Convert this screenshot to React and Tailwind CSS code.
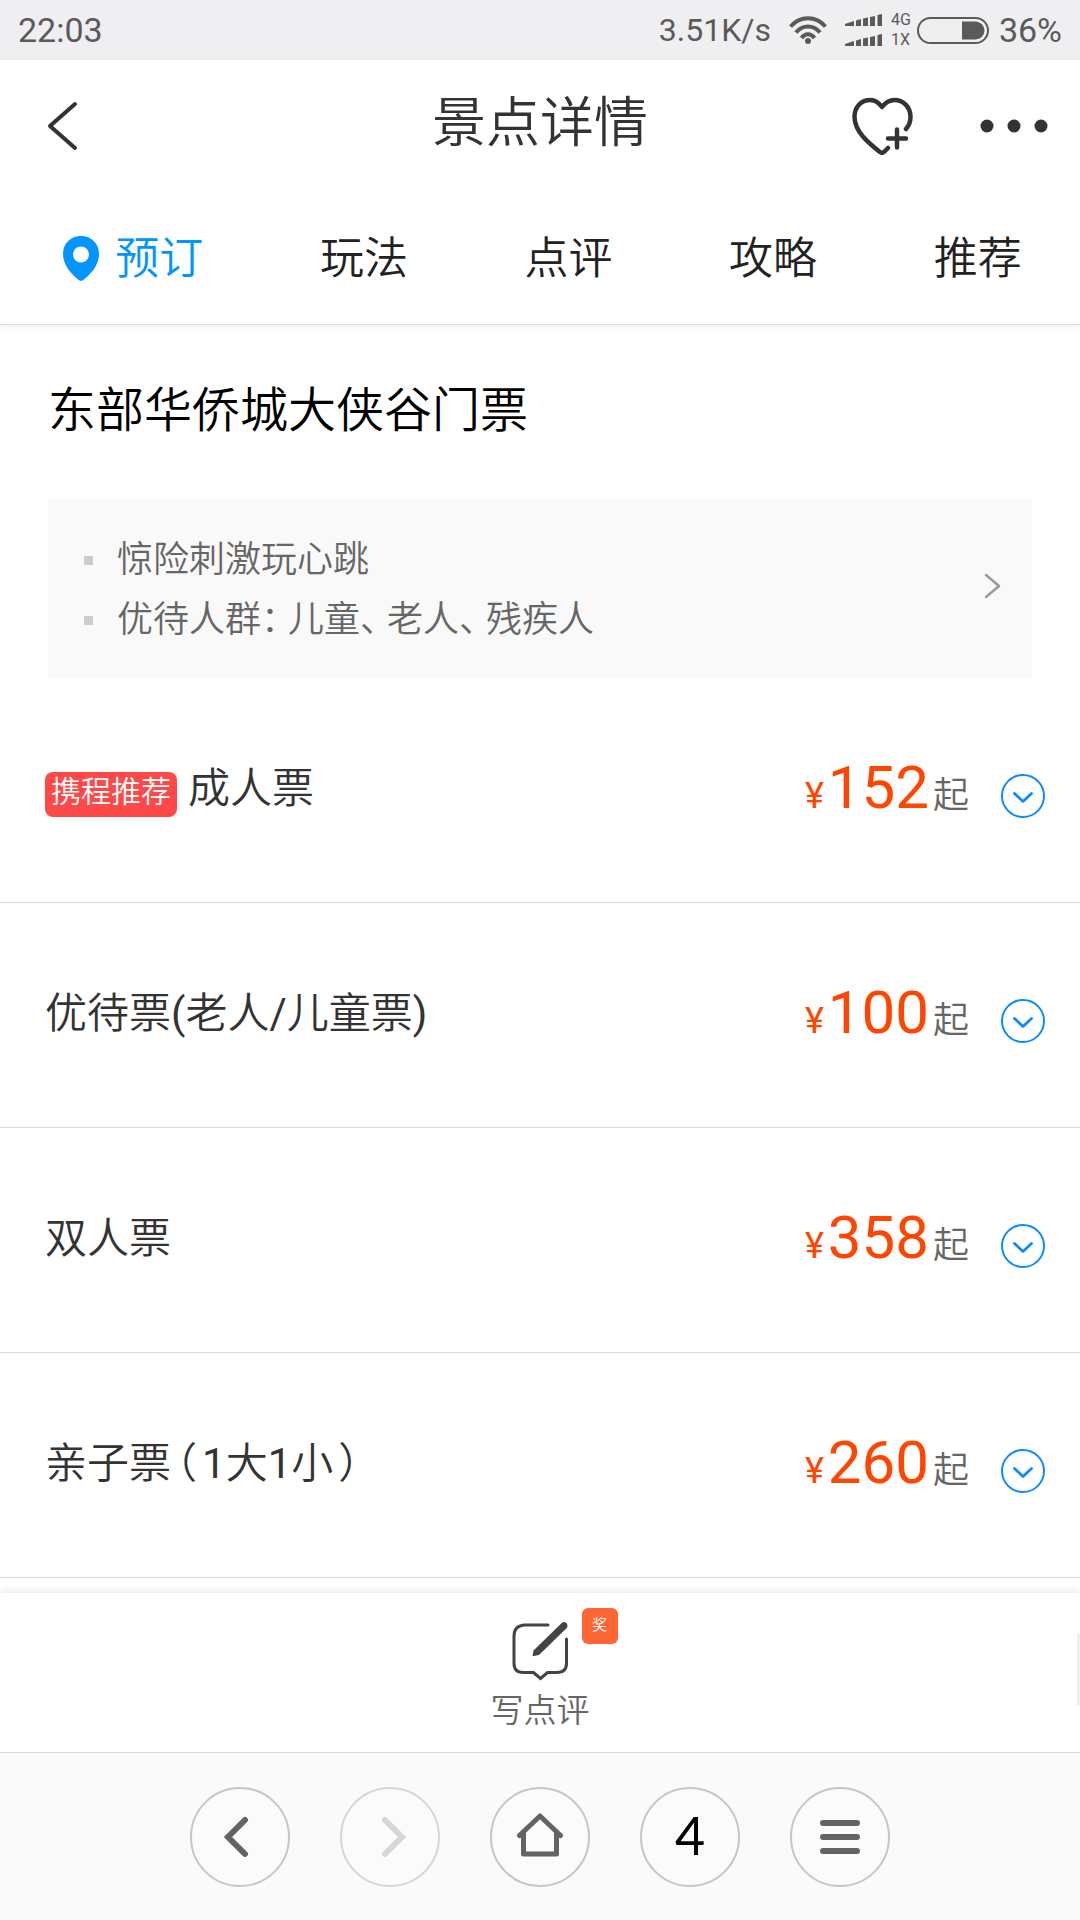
import React from "react";
import clsx from "clsx";

const tabs = ["预订", "玩法", "点评", "攻略", "推荐"];

const tickets = [
  { id: "adult", name: "成人票", price: 152, tag: "携程推荐" },
  { id: "discount", name: "优待票(老人/儿童票)", price: 100 },
  { id: "double", name: "双人票", price: 358 },
  { id: "family", name: "亲子票（1大1小）", price: 260 },
];

// Full-width punctuation is set half width with a little air around it,
// and latin runs are a step heavier than the Chinese text
const MixedText = ({ children }) =>
  children.split(/([：、（）]|[0-9()/]+)/).map((part, i) => {
    if (/^[0-9()/]+$/.test(part)) {
      return (
        <span key={i} className="font-normal">
          {part}
        </span>
      );
    }
    if (!/^[：、（）]$/.test(part)) return part;
    return (
      <span
        key={i}
        className={clsx(
          "[font-feature-settings:'halt']",
          /[（）]/.test(part) ? "mx-[5px]" : "mr-[9px]"
        )}
      >
        {part}
      </span>
    );
  });

const WifiIcon = () => (
  <svg width="38" height="30" viewBox="0 0 38 30" fill="none" stroke="currentColor" strokeWidth="4">
    <path d="M1.5 11.5C11 0.5 27 0.5 36.5 11.5" />
    <path d="M7 17.5C13.5 9.5 24.5 9.5 31 17.5" />
    <path d="M12.5 23C16 18 22 18 25.5 23" />
    <circle cx="19" cy="26" r="3" fill="currentColor" stroke="none" />
  </svg>
);

const SignalIcon = () => (
  <svg width="38" height="12" viewBox="0 0 38 12" fill="currentColor">
    <path d="M0 12V10L9 7V12ZM11 12V6.5L16 5V12ZM18 12V4.5L23 3.5V12ZM25 12V3L30 2V12ZM32.500 12V1L37 0V12Z" />
  </svg>
);

const BatteryIcon = () => (
  <svg width="72" height="27" viewBox="0 0 72 27" fill="none">
    <rect x="1" y="1" width="70" height="25" rx="12.500" stroke="currentColor" strokeWidth="2" />
    <path d="M45 4.500H58.500A9 9 0 0 1 58.500 22.500H45Z" fill="currentColor" />
  </svg>
);

const StatusBar = () => (
  <div className="flex h-[60px] items-center justify-between bg-[#efeff1] px-[18px] text-[34px] leading-none font-normal text-[#5a5a5a]">
    <span>22:03</span>
    <div className="flex items-center">
      <span className="text-[32px]">3.51K/s</span>
      <span className="ml-[18px]">
        <WifiIcon />
      </span>
      <span className="ml-[18px] flex flex-col gap-2">
        <SignalIcon />
        <SignalIcon />
      </span>
      <span className="ml-2 flex flex-col text-[16px] leading-5">
        <span>4G</span>
        <span>1X</span>
      </span>
      <span className="ml-1.5">
        <BatteryIcon />
      </span>
      <span className="ml-[10px]">36%</span>
    </div>
  </div>
);

const Header = () => (
  <header className="grid h-[132px] grid-cols-[1fr_auto_1fr] items-center text-[#333]">
    <div className="flex pl-[47px]">
      <button type="button" aria-label="返回">
        <svg width="32" height="50" viewBox="0 0 32 50" fill="none" stroke="currentColor" strokeWidth="4" strokeLinecap="round" strokeLinejoin="round">
          <path d="M28 3L3 25L28 47" />
        </svg>
      </button>
    </div>
    <h1 className="pb-1 text-[54px] leading-[64px]">景点详情</h1>
    <div className="flex items-center justify-end gap-[67px] pr-8">
      <button type="button" aria-label="收藏">
        <svg width="61" height="58" viewBox="0 0 61 58" fill="none" stroke="currentColor" strokeWidth="4.500" strokeLinecap="round" strokeLinejoin="round">
          <path d="M54 32C57.500 28 58.500 24 58.500 20C58.500 9.500 51 3 42.500 3C37.500 3 33 6 30 10C27 6 23.500 3 18.500 3C9 3 2.500 10 2.500 20C2.500 35 18 47 28 55Q30 56.500 32 55L36 51" />
          <path d="M45 32.500V50.500M36 41.500H54" />
        </svg>
      </button>
      <button type="button" aria-label="更多">
        <svg width="68" height="14" viewBox="0 0 68 14" fill="currentColor">
          <circle cx="7" cy="7" r="6.500" />
          <circle cx="34" cy="7" r="6.500" />
          <circle cx="61" cy="7" r="6.500" />
        </svg>
      </button>
    </div>
  </header>
);

const Tabs = () => (
  <nav className="grid h-[133px] grid-cols-5 border-b border-[#dedede] pt-px pl-[57px] shadow-[0_3px_6px_rgba(0,0,0,0.06)]">
    {tabs.map((tab, i) => (
      <a
        key={tab}
        href="#"
        className={clsx(
          "flex items-center justify-center text-[44px] leading-[56px]",
          i === 0 ? "text-[#0095ff]" : "text-[#222]"
        )}
      >
        {i === 0 && (
          <svg className="mr-4 -ml-[52px]" width="36" height="45" viewBox="0 0 36 45" fill="currentColor">
            <path
              fillRule="evenodd"
              d="M18 0C28 0 36 7 36 18C36 29 28 38 20 44.200Q18 45.500 16 44.200C8 38 0 29 0 18C0 7 8 0 18 0ZM18 10.500A8 8 0 1 0 18 26.500A8 8 0 1 0 18 10.500Z"
            />
          </svg>
        )}
        {tab}
      </a>
    ))}
  </nav>
);

const Notice = () => (
  <a href="#" className="mx-12 flex items-center justify-between bg-[#f9f9f9] pt-[31px] pb-7 pr-[31px] pl-9">
    <ul className="text-[36px] leading-[60px] text-[#666]">
      {["惊险刺激玩心跳", "优待人群：儿童、老人、残疾人"].map((line) => (
        <li key={line} className="flex items-center">
          <span className="mr-6 size-[9px] bg-[#ccc]" />
          <span>
            <MixedText>{line}</MixedText>
          </span>
        </li>
      ))}
    </ul>
    <svg className="mb-2" width="17" height="26" viewBox="0 0 17 26" fill="none" stroke="#999" strokeWidth="2.500" strokeLinecap="round" strokeLinejoin="round">
      <path d="M2 2L15 13L2 24" />
    </svg>
  </a>
);

const TicketRow = ({ ticket }) => (
  <li className="flex h-[225px] items-center border-b border-[#d9d9d9] pr-[35px] pb-1 pl-[45px]">
    {ticket.tag && (
      <span className="mt-3 mr-[11px] flex h-[45px] items-center rounded-lg bg-[#ff4848] px-1.5 pb-1 text-[30px] leading-none text-white">
        {ticket.tag}
      </span>
    )}
    <h3 className="flex-1 pt-0.5 text-[42px] leading-[60px] text-[#333]">
      <MixedText>{ticket.name}</MixedText>
    </h3>
    <p className="flex items-baseline gap-1 pt-2 leading-[60px]">
      <span className="text-[36px] font-normal text-[#ff4500]">¥</span>
      <span className="text-[60px] font-normal text-[#ff4500]">{ticket.price}</span>
      <span className="text-[36px] text-[#666]">起</span>
    </p>
    <button type="button" aria-label={`展开${ticket.name}`} className="mt-4 ml-8">
      <svg width="44" height="44" viewBox="0 0 44 44" fill="none" stroke="#0a8cff" strokeLinecap="round" strokeLinejoin="round">
        <circle cx="22" cy="22" r="21" strokeWidth="2" />
        <path d="M13.500 19.500L22 27.500L30.500 19.500" strokeWidth="2.800" />
      </svg>
    </button>
  </li>
);

const ReviewBar = () => (
  <div className="relative flex justify-center bg-white pt-7 pb-[21px] shadow-[0_-3px_6px_rgba(0,0,0,0.08)]">
    <button type="button" className="relative flex flex-col items-center text-[#444]">
      <svg width="56" height="60" viewBox="0 0 56 60" fill="none" stroke="currentColor" strokeWidth="3" strokeLinecap="round">
        <path d="M36 4H12Q2 5 2 15V42Q2 51.500 11 51.500H21.500L28.500 57.500L35.500 51.500H45Q54.500 51.500 54.500 42V18" />
        <path d="M49.500 2.200Q52 0 54.500 2.200Q56.500 4.700 54.500 7.200L27 34L20.500 35.200L21.500 29.500Z" fill="currentColor" stroke="none" />
      </svg>
      <span className="mt-[10px] text-[33px] leading-10 text-[#666]">写点评</span>
      <span className="absolute -top-[13px] left-[91px] flex size-9 items-center justify-center rounded-md bg-[#ff6633] pb-0.5 text-[15px] leading-none text-white">
        奖
      </span>
    </button>
    <span className="absolute top-10 right-0 h-[72px] w-[3px] bg-[#efefef]" />
  </div>
);

const NavButton = ({ label, disabled, children }) => (
  <button
    type="button"
    aria-label={label}
    disabled={disabled}
    className={clsx(
      "flex size-[100px] items-center justify-center rounded-full border-2 bg-[#fbfbfb]",
      disabled ? "border-[#d6d6d6] text-[#d6d6d6]" : "border-[#c6c6c6] text-[#636363]"
    )}
  >
    {children}
  </button>
);

const BrowserBar = () => (
  <nav className="flex justify-center gap-[50px] border-t border-[#dcdcdc] bg-[#fafafa] pt-[34px] pb-[33px]">
    <NavButton label="后退">
      <svg className="mr-2" width="26" height="42" viewBox="0 0 26 42" fill="none" stroke="currentColor" strokeWidth="6" strokeLinecap="round">
        <path d="M22 4L5 21L22 38" />
      </svg>
    </NavButton>
    <NavButton label="前进" disabled>
      <svg className="ml-2" width="26" height="42" viewBox="0 0 26 42" fill="none" stroke="currentColor" strokeWidth="6" strokeLinecap="round">
        <path d="M4 4L21 21L4 38" />
      </svg>
    </NavButton>
    <NavButton label="主页">
      <svg className="mb-1" width="48" height="46" viewBox="0 0 48 46" fill="none" stroke="currentColor" strokeWidth="5" strokeLinecap="round" strokeLinejoin="round">
        <path d="M3.500 23.500L24 4L44.500 23.500" />
        <path d="M7.500 21V42H40.500V21" />
      </svg>
    </NavButton>
    <NavButton label="4 个窗口">
      <span className="pb-1 font-['Lato'] text-[52px] leading-none font-normal text-black">4</span>
    </NavButton>
    <NavButton label="菜单">
      <svg width="40" height="34" viewBox="0 0 40 34" fill="currentColor">
        <rect y="0" width="40" height="6" rx="3" />
        <rect y="14" width="40" height="6" rx="3" />
        <rect y="28" width="40" height="6" rx="3" />
      </svg>
    </NavButton>
  </nav>
);

export default function App() {
  return (
    <div className="flex min-h-screen flex-col bg-white font-['Roboto','Noto_Sans_CJK_SC',sans-serif] font-[350]" lang="zh-CN">
      <StatusBar />
      <Header />
      <Tabs />
      <main className="flex-1 pt-[54px]">
        <h2 className="mb-14 px-12 text-[48px] leading-[64px] text-black">东部华侨城大侠谷门票</h2>
        <Notice />
        <ul>
          {tickets.map((ticket) => (
            <TicketRow key={ticket.id} ticket={ticket} />
          ))}
        </ul>
      </main>
      <ReviewBar />
      <BrowserBar />
    </div>
  );
}
